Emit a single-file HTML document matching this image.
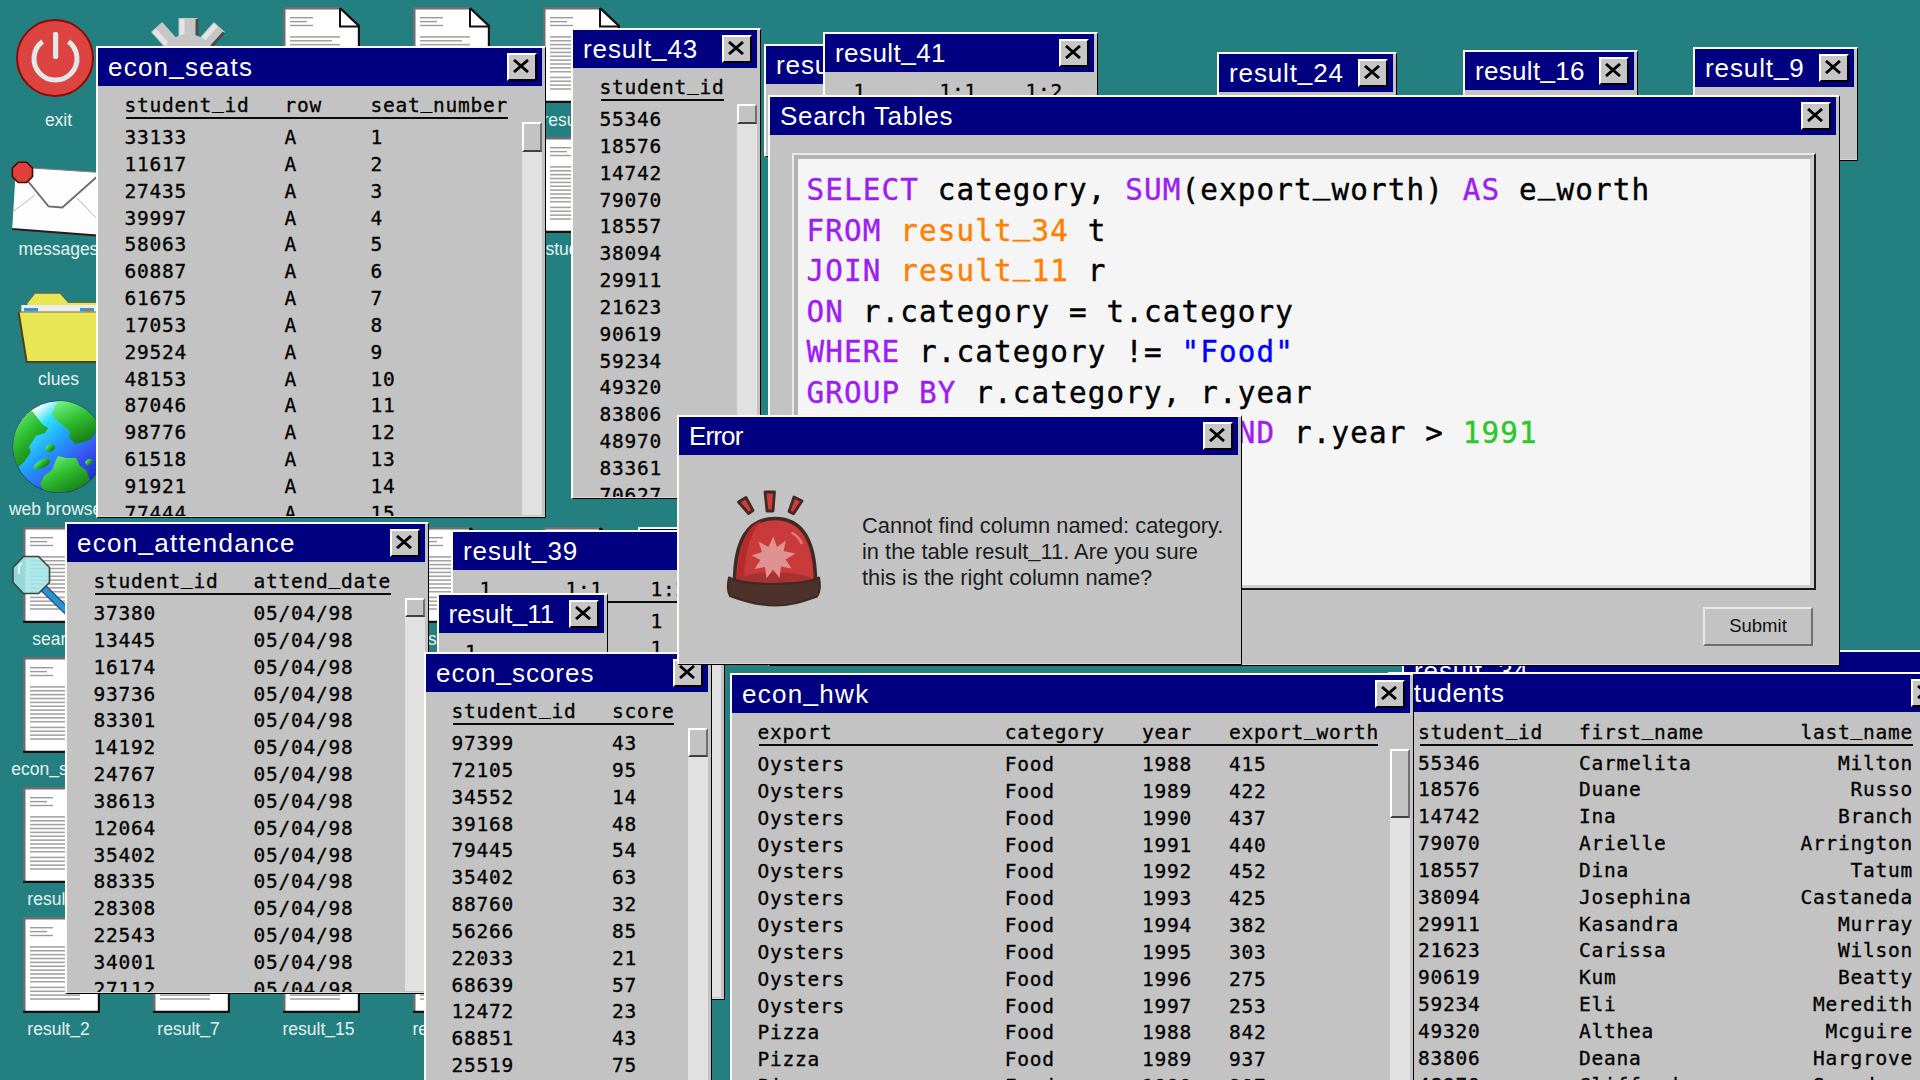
<!DOCTYPE html><html><head><meta charset="utf-8"><title>desktop</title><style>
*{box-sizing:border-box;margin:0;padding:0}
html,body{width:1920px;height:1080px;overflow:hidden;background:#248080}
body{position:relative;font-family:"Liberation Sans",sans-serif}
.win{position:absolute;background:#c3c3c3;border-top:2px solid #fcfcf4;border-left:2px solid #fcfcf4;border-right:1px solid #000;border-bottom:1px solid #000;overflow:hidden}
.win:after{content:"";position:absolute;left:0;right:0;bottom:0;height:1px;background:#dcdcdc}
.tb{position:absolute;left:0;top:0;right:3.5px;height:38px;background:#000080;color:#fff;font:26px "Liberation Sans",sans-serif;line-height:39px;padding-left:10px;white-space:nowrap;overflow:hidden}
.cb{position:absolute;top:5px;right:5px;width:30px;height:27.5px;background:#c6c6c6;border-top:2px solid #fff;border-left:2px solid #fff;border-right:2px solid #000;border-bottom:2px solid #000}
.cb svg{position:absolute;left:4.75px;top:3.85px}
.m{font-family:"DejaVu Sans Mono","Liberation Mono",monospace;font-size:19.5px;letter-spacing:0.76px;color:#000;white-space:pre;line-height:26.85px;-webkit-text-stroke:0.3px #000}
.col{position:absolute;top:0}
.ul{position:relative;top:-2px}.u{position:relative;top:-4.4px}.ut{position:relative;top:-2.5px}.us{position:relative;top:-6.6px}
.hl{position:absolute;height:2px;background:#0a0a0a}
.trk{position:absolute;width:20px;background:#e1e1e1}
.th{position:absolute;width:20px;background:#c3c3c3;border-top:2px solid #fff;border-left:2px solid #fff;border-right:2px solid #707070;border-bottom:2px solid #404040}
.ico{position:absolute}
.lbl{position:absolute;width:130px;text-align:center;font:17.5px "Liberation Sans",sans-serif;color:#e4f2f2;white-space:nowrap;line-height:20px}
.ed{position:absolute;border-top:2px solid #e8e8e8;border-left:2px solid #e8e8e8;border-right:2px solid #1c1c1c;border-bottom:2px solid #1c1c1c}
.edi{position:absolute;left:0;top:0;right:0;bottom:0;background:#f5f5f5;border-top:4px solid #b2b2b2;border-left:4px solid #b2b2b2;border-right:4px solid #cdd1cd;border-bottom:3px solid #cdd1cd}
.sql{position:absolute;left:8.5px;top:11px;-webkit-text-stroke:0.4px;font-family:"DejaVu Sans Mono","Liberation Mono",monospace;font-size:29.25px;letter-spacing:1.14px;line-height:40.5px;white-space:pre;color:#000}
.k{color:#9d1df2}.t{color:#ff8000}.s{color:#0000ff}.n{color:#2ac82a}
.btn{position:absolute;background:#c3c3c3;border-top:2px solid #e8e8e8;border-left:2px solid #e8e8e8;border-right:2px solid #6e6e6e;border-bottom:2px solid #6e6e6e;font:18.5px "Liberation Sans",sans-serif;color:#111;text-align:center}
.err{position:absolute;font:21.85px "Liberation Sans",sans-serif;line-height:26.2px;color:#1c1c1c;white-space:pre}
</style></head><body><svg class="ico" style="left:15.2px;top:17px" width="80" height="82" viewBox="0 0 80 82">
<circle cx="40" cy="41" r="38" fill="#dd4340" stroke="#8c0a08" stroke-width="2"/>
<path d="M27.5 24.5 A21.5 21.5 0 1 0 53.5 24.5" stroke="#dfe9e9" stroke-width="5" fill="none"/>
<rect x="38" y="15" width="5.2" height="27" rx="2" fill="#dfe9e9"/></svg>
<div class="lbl" style="left:-6.5px;top:109.6px">exit</div>
<svg class="ico" style="left:140px;top:14px" width="96" height="96" viewBox="-48 -48 96 96"><rect x="-9.5" y="-44" width="19" height="26" fill="#c6c6c6" transform="rotate(0)"/><rect x="-8.5" y="-43" width="5" height="17" fill="#e4e4e4" transform="rotate(0)"/><rect x="7.5" y="-43" width="3" height="17" fill="#4a4a4a" transform="rotate(0)"/><rect x="-7.5" y="-47" width="15" height="26" fill="#c6c6c6" transform="rotate(42)"/><rect x="-6.5" y="-46" width="5" height="20" fill="#e4e4e4" transform="rotate(42)"/><rect x="5.5" y="-46" width="3" height="20" fill="#4a4a4a" transform="rotate(42)"/><rect x="-9.5" y="-44" width="19" height="26" fill="#c6c6c6" transform="rotate(90)"/><rect x="-8.5" y="-43" width="5" height="17" fill="#e4e4e4" transform="rotate(90)"/><rect x="7.5" y="-43" width="3" height="17" fill="#4a4a4a" transform="rotate(90)"/><rect x="-7.5" y="-47" width="15" height="26" fill="#c6c6c6" transform="rotate(135)"/><rect x="-6.5" y="-46" width="5" height="20" fill="#e4e4e4" transform="rotate(135)"/><rect x="5.5" y="-46" width="3" height="20" fill="#4a4a4a" transform="rotate(135)"/><rect x="-9.5" y="-44" width="19" height="26" fill="#c6c6c6" transform="rotate(180)"/><rect x="-8.5" y="-43" width="5" height="17" fill="#e4e4e4" transform="rotate(180)"/><rect x="-7.5" y="-47" width="15" height="26" fill="#c6c6c6" transform="rotate(225)"/><rect x="-6.5" y="-46" width="5" height="20" fill="#e4e4e4" transform="rotate(225)"/><rect x="-9.5" y="-44" width="19" height="26" fill="#c6c6c6" transform="rotate(270)"/><rect x="-8.5" y="-43" width="5" height="17" fill="#e4e4e4" transform="rotate(270)"/><rect x="-7.5" y="-47" width="15" height="26" fill="#c6c6c6" transform="rotate(318)"/><rect x="-6.5" y="-46" width="5" height="20" fill="#e4e4e4" transform="rotate(318)"/><circle r="28" fill="#c6c6c6"/><circle r="12" fill="#248080"/></svg>
<div class="lbl" style="left:123.5px;top:109.6px">settings</div>
<svg class="ico" style="left:8px;top:158px" width="100" height="84" viewBox="8 158 100 84">
<path d="M16 167 L101 172.5 L104 236 L12.2 229 Z" fill="#fdfdfd"/>
<path d="M104 236 L12.2 229" stroke="#2a1a1a" stroke-width="2" fill="none"/>
<path d="M16 167 L101 172.5" stroke="#8a7a7a" stroke-width="1.2" fill="none"/>
<path d="M18 169 L48.5 206.4 L62.3 207.5 L100 174" stroke="#6e6a6a" stroke-width="1.8" fill="none"/>
<path d="M12.5 212 L35 195 M77 198 L103 225" stroke="#b8b4b4" stroke-width="1" fill="none"/>
<path d="M18.2 162.3 H26.6 L32.5 168.2 V176.6 L26.6 182.5 H18.2 L12.3 176.6 V168.2 Z" fill="#e0403a" stroke="#4a0a08" stroke-width="1.6"/></svg>
<div class="lbl" style="left:-6.5px;top:239.45px">messages</div>
<svg class="ico" style="left:14px;top:288px" width="96" height="80" viewBox="14 288 96 80">
<path d="M27 303.5 L35 293.3 H60 L68 302.4 H104 V320 H27 Z" fill="#e8e654" stroke="#6a5a30" stroke-width="0.8"/>
<rect x="21.3" y="305" width="82" height="7" fill="#ececec"/>
<rect x="24" y="308" width="14" height="3.4" fill="#2a9ae6"/><rect x="80" y="308" width="14" height="3.4" fill="#2a9ae6"/><rect x="87" y="308" width="3" height="3.4" fill="#e06030"/>
<path d="M18.6 312 H104 L98 362 H26.6 Z" fill="#e8e654"/>
<path d="M18.6 312 L26.6 362 H98" stroke="#50401c" stroke-width="2" fill="none"/>
<path d="M18.6 312 H104" stroke="#7a6a3a" stroke-width="1" fill="none"/></svg>
<div class="lbl" style="left:-6.5px;top:369.3px">clues</div>
<svg class="ico" style="left:10px;top:398px" width="100" height="98" viewBox="10 398 100 98">
<defs><linearGradient id="sea" x1="0.15" y1="0.1" x2="0.85" y2="0.9"><stop offset="0.05" stop-color="#ffffff"/><stop offset="0.22" stop-color="#30e0ff"/><stop offset="0.45" stop-color="#20a0ff"/><stop offset="0.75" stop-color="#3a50f0"/><stop offset="1" stop-color="#1830c0"/></linearGradient>
<linearGradient id="land" x1="0.2" y1="0" x2="0.8" y2="1"><stop offset="0" stop-color="#70f080"/><stop offset="0.4" stop-color="#30c030"/><stop offset="1" stop-color="#0f6a10"/></linearGradient>
<clipPath id="gc"><circle cx="59" cy="446.7" r="45.7"/></clipPath></defs>
<circle cx="59" cy="446.7" r="46" fill="url(#sea)" stroke="#1a3a50" stroke-width="0.8"/>
<g clip-path="url(#gc)" fill="url(#land)">
<path d="M30 408 L42 424 L48 428 L45 433 L36 436 L29 447 L31 452 L24 462 L17 468 L10 460 L10 420 Z"/>
<path d="M58 400 L52 414 L56 420 L64 426 L70 432 L69 438 L76 444 L90 440 L96 432 L110 428 L110 400 Z"/>
<path d="M40 484 L44 476 L52 470 L55 462 L58 456 L66 458 L76 458 L80 466 L86 470 L90 480 L80 492 L60 498 L46 494 Z"/>
<ellipse cx="50" cy="448" rx="5" ry="3.6" transform="rotate(-25 50 448)"/>
<ellipse cx="42" cy="464" rx="9" ry="4" transform="rotate(-28 42 464)"/>
<ellipse cx="89" cy="462" rx="4" ry="2.8" transform="rotate(-25 89 462)"/>
</g></svg>
<div class="lbl" style="left:-6.5px;top:499.15px">web browser</div>
<div class="ico" style="left:282.5px;top:7.3px"><svg width="77" height="96" viewBox="0 0 77 96"><path d="M1 1 H57 L76 19 V95 H1 Z" fill="#fff"/><path d="M1.2 95 V1.2 H57" stroke="#6e6e6e" stroke-width="2.6" fill="none"/><path d="M57 1 L76 19 V95 H0" stroke="#111" stroke-width="2.4" fill="none"/><path d="M57 1 V19.5 H76" stroke="#111" stroke-width="2" fill="none"/><rect x="7" y="10" width="23" height="1.4" fill="#9a9a9a"/><rect x="7" y="13.9" width="17" height="1.4" fill="#9a9a9a"/><rect x="7" y="17.8" width="23" height="1.4" fill="#9a9a9a"/><rect x="7" y="29.1" width="50" height="1.6" fill="#a4a4a4"/><rect x="7" y="32.97" width="42" height="1.6" fill="#a4a4a4"/><rect x="7" y="36.84" width="50" height="1.6" fill="#a4a4a4"/><rect x="7" y="40.71" width="50" height="1.6" fill="#a4a4a4"/><rect x="7" y="44.58" width="50" height="1.6" fill="#a4a4a4"/><rect x="7" y="48.45" width="50" height="1.6" fill="#a4a4a4"/><rect x="7" y="52.32" width="50" height="1.6" fill="#a4a4a4"/><rect x="7" y="56.19" width="50" height="1.6" fill="#a4a4a4"/><rect x="7" y="60.06" width="50" height="1.6" fill="#a4a4a4"/><rect x="7" y="63.93" width="50" height="1.6" fill="#a4a4a4"/><rect x="7" y="69.6" width="50" height="1.6" fill="#a4a4a4"/><rect x="7" y="73.47" width="50" height="1.6" fill="#a4a4a4"/><rect x="7" y="77.34" width="50" height="1.6" fill="#a4a4a4"/><rect x="7" y="81.21" width="50" height="1.6" fill="#a4a4a4"/></svg></div>
<div class="lbl" style="left:253.5px;top:109.6px">result<span class="ul">_</span>40</div>
<div class="ico" style="left:412.5px;top:7.3px"><svg width="77" height="96" viewBox="0 0 77 96"><path d="M1 1 H57 L76 19 V95 H1 Z" fill="#fff"/><path d="M1.2 95 V1.2 H57" stroke="#6e6e6e" stroke-width="2.6" fill="none"/><path d="M57 1 L76 19 V95 H0" stroke="#111" stroke-width="2.4" fill="none"/><path d="M57 1 V19.5 H76" stroke="#111" stroke-width="2" fill="none"/><rect x="7" y="10" width="23" height="1.4" fill="#9a9a9a"/><rect x="7" y="13.9" width="17" height="1.4" fill="#9a9a9a"/><rect x="7" y="17.8" width="23" height="1.4" fill="#9a9a9a"/><rect x="7" y="29.1" width="50" height="1.6" fill="#a4a4a4"/><rect x="7" y="32.97" width="42" height="1.6" fill="#a4a4a4"/><rect x="7" y="36.84" width="50" height="1.6" fill="#a4a4a4"/><rect x="7" y="40.71" width="50" height="1.6" fill="#a4a4a4"/><rect x="7" y="44.58" width="50" height="1.6" fill="#a4a4a4"/><rect x="7" y="48.45" width="50" height="1.6" fill="#a4a4a4"/><rect x="7" y="52.32" width="50" height="1.6" fill="#a4a4a4"/><rect x="7" y="56.19" width="50" height="1.6" fill="#a4a4a4"/><rect x="7" y="60.06" width="50" height="1.6" fill="#a4a4a4"/><rect x="7" y="63.93" width="50" height="1.6" fill="#a4a4a4"/><rect x="7" y="69.6" width="50" height="1.6" fill="#a4a4a4"/><rect x="7" y="73.47" width="50" height="1.6" fill="#a4a4a4"/><rect x="7" y="77.34" width="50" height="1.6" fill="#a4a4a4"/><rect x="7" y="81.21" width="50" height="1.6" fill="#a4a4a4"/></svg></div>
<div class="lbl" style="left:383.5px;top:109.6px">result<span class="ul">_</span>41</div>
<div class="ico" style="left:542.5px;top:7.3px"><svg width="77" height="96" viewBox="0 0 77 96"><path d="M1 1 H57 L76 19 V95 H1 Z" fill="#fff"/><path d="M1.2 95 V1.2 H57" stroke="#6e6e6e" stroke-width="2.6" fill="none"/><path d="M57 1 L76 19 V95 H0" stroke="#111" stroke-width="2.4" fill="none"/><path d="M57 1 V19.5 H76" stroke="#111" stroke-width="2" fill="none"/><rect x="7" y="10" width="23" height="1.4" fill="#9a9a9a"/><rect x="7" y="13.9" width="17" height="1.4" fill="#9a9a9a"/><rect x="7" y="17.8" width="23" height="1.4" fill="#9a9a9a"/><rect x="7" y="29.1" width="50" height="1.6" fill="#a4a4a4"/><rect x="7" y="32.97" width="42" height="1.6" fill="#a4a4a4"/><rect x="7" y="36.84" width="50" height="1.6" fill="#a4a4a4"/><rect x="7" y="40.71" width="50" height="1.6" fill="#a4a4a4"/><rect x="7" y="44.58" width="50" height="1.6" fill="#a4a4a4"/><rect x="7" y="48.45" width="50" height="1.6" fill="#a4a4a4"/><rect x="7" y="52.32" width="50" height="1.6" fill="#a4a4a4"/><rect x="7" y="56.19" width="50" height="1.6" fill="#a4a4a4"/><rect x="7" y="60.06" width="50" height="1.6" fill="#a4a4a4"/><rect x="7" y="63.93" width="50" height="1.6" fill="#a4a4a4"/><rect x="7" y="69.6" width="50" height="1.6" fill="#a4a4a4"/><rect x="7" y="73.47" width="50" height="1.6" fill="#a4a4a4"/><rect x="7" y="77.34" width="50" height="1.6" fill="#a4a4a4"/><rect x="7" y="81.21" width="50" height="1.6" fill="#a4a4a4"/></svg></div>
<div class="lbl" style="left:513.5px;top:109.6px">result<span class="ul">_</span>43</div>
<div class="ico" style="left:542.5px;top:137.3px"><svg width="77" height="96" viewBox="0 0 77 96"><path d="M1 1 H57 L76 19 V95 H1 Z" fill="#fff"/><path d="M1.2 95 V1.2 H57" stroke="#6e6e6e" stroke-width="2.6" fill="none"/><path d="M57 1 L76 19 V95 H0" stroke="#111" stroke-width="2.4" fill="none"/><path d="M57 1 V19.5 H76" stroke="#111" stroke-width="2" fill="none"/><rect x="7" y="10" width="23" height="1.4" fill="#9a9a9a"/><rect x="7" y="13.9" width="17" height="1.4" fill="#9a9a9a"/><rect x="7" y="17.8" width="23" height="1.4" fill="#9a9a9a"/><rect x="7" y="29.1" width="50" height="1.6" fill="#a4a4a4"/><rect x="7" y="32.97" width="42" height="1.6" fill="#a4a4a4"/><rect x="7" y="36.84" width="50" height="1.6" fill="#a4a4a4"/><rect x="7" y="40.71" width="50" height="1.6" fill="#a4a4a4"/><rect x="7" y="44.58" width="50" height="1.6" fill="#a4a4a4"/><rect x="7" y="48.45" width="50" height="1.6" fill="#a4a4a4"/><rect x="7" y="52.32" width="50" height="1.6" fill="#a4a4a4"/><rect x="7" y="56.19" width="50" height="1.6" fill="#a4a4a4"/><rect x="7" y="60.06" width="50" height="1.6" fill="#a4a4a4"/><rect x="7" y="63.93" width="50" height="1.6" fill="#a4a4a4"/><rect x="7" y="69.6" width="50" height="1.6" fill="#a4a4a4"/><rect x="7" y="73.47" width="50" height="1.6" fill="#a4a4a4"/><rect x="7" y="77.34" width="50" height="1.6" fill="#a4a4a4"/><rect x="7" y="81.21" width="50" height="1.6" fill="#a4a4a4"/></svg></div>
<div class="lbl" style="left:513.5px;top:239.45px">students</div>
<div class="ico" style="left:22.5px;top:527.3px"><svg width="77" height="96" viewBox="0 0 77 96"><path d="M1 1 H57 L76 19 V95 H1 Z" fill="#fff"/><path d="M1.2 95 V1.2 H57" stroke="#6e6e6e" stroke-width="2.6" fill="none"/><path d="M57 1 L76 19 V95 H0" stroke="#111" stroke-width="2.4" fill="none"/><path d="M57 1 V19.5 H76" stroke="#111" stroke-width="2" fill="none"/><rect x="7" y="10" width="23" height="1.4" fill="#9a9a9a"/><rect x="7" y="13.9" width="17" height="1.4" fill="#9a9a9a"/><rect x="7" y="17.8" width="23" height="1.4" fill="#9a9a9a"/><rect x="7" y="29.1" width="50" height="1.6" fill="#a4a4a4"/><rect x="7" y="32.97" width="42" height="1.6" fill="#a4a4a4"/><rect x="7" y="36.84" width="50" height="1.6" fill="#a4a4a4"/><rect x="7" y="40.71" width="50" height="1.6" fill="#a4a4a4"/><rect x="7" y="44.58" width="50" height="1.6" fill="#a4a4a4"/><rect x="7" y="48.45" width="50" height="1.6" fill="#a4a4a4"/><rect x="7" y="52.32" width="50" height="1.6" fill="#a4a4a4"/><rect x="7" y="56.19" width="50" height="1.6" fill="#a4a4a4"/><rect x="7" y="60.06" width="50" height="1.6" fill="#a4a4a4"/><rect x="7" y="63.93" width="50" height="1.6" fill="#a4a4a4"/><rect x="7" y="69.6" width="50" height="1.6" fill="#a4a4a4"/><rect x="7" y="73.47" width="50" height="1.6" fill="#a4a4a4"/><rect x="7" y="77.34" width="50" height="1.6" fill="#a4a4a4"/><rect x="7" y="81.21" width="50" height="1.6" fill="#a4a4a4"/></svg></div>
<div class="lbl" style="left:-6.5px;top:629px">search</div>
<svg class="ico" style="left:10px;top:552px" width="70" height="70" viewBox="10 552 70 70">
<path d="M44 588.7 L70 614" stroke="#3a4a58" stroke-width="8" fill="none"/>
<path d="M44 588.7 L70 614" stroke="#2494d8" stroke-width="5.4" fill="none"/>
<path d="M23.5 556.5 H38.5 L49.5 567.5 V582.5 L38.5 593.5 H23.5 L13 582.5 V567.5 Z" fill="#a4e6e6" fill-opacity="0.88" stroke="#3c4444" stroke-width="1.6"/>
<path d="M19 574 V566 L22 563" stroke="#f4ffff" stroke-width="1.6" fill="none"/></svg>
<div class="ico" style="left:152.5px;top:527.3px"><svg width="77" height="96" viewBox="0 0 77 96"><path d="M1 1 H57 L76 19 V95 H1 Z" fill="#fff"/><path d="M1.2 95 V1.2 H57" stroke="#6e6e6e" stroke-width="2.6" fill="none"/><path d="M57 1 L76 19 V95 H0" stroke="#111" stroke-width="2.4" fill="none"/><path d="M57 1 V19.5 H76" stroke="#111" stroke-width="2" fill="none"/><rect x="7" y="10" width="23" height="1.4" fill="#9a9a9a"/><rect x="7" y="13.9" width="17" height="1.4" fill="#9a9a9a"/><rect x="7" y="17.8" width="23" height="1.4" fill="#9a9a9a"/><rect x="7" y="29.1" width="50" height="1.6" fill="#a4a4a4"/><rect x="7" y="32.97" width="42" height="1.6" fill="#a4a4a4"/><rect x="7" y="36.84" width="50" height="1.6" fill="#a4a4a4"/><rect x="7" y="40.71" width="50" height="1.6" fill="#a4a4a4"/><rect x="7" y="44.58" width="50" height="1.6" fill="#a4a4a4"/><rect x="7" y="48.45" width="50" height="1.6" fill="#a4a4a4"/><rect x="7" y="52.32" width="50" height="1.6" fill="#a4a4a4"/><rect x="7" y="56.19" width="50" height="1.6" fill="#a4a4a4"/><rect x="7" y="60.06" width="50" height="1.6" fill="#a4a4a4"/><rect x="7" y="63.93" width="50" height="1.6" fill="#a4a4a4"/><rect x="7" y="69.6" width="50" height="1.6" fill="#a4a4a4"/><rect x="7" y="73.47" width="50" height="1.6" fill="#a4a4a4"/><rect x="7" y="77.34" width="50" height="1.6" fill="#a4a4a4"/><rect x="7" y="81.21" width="50" height="1.6" fill="#a4a4a4"/></svg></div>
<div class="lbl" style="left:123.5px;top:629px">result<span class="ul">_</span>21</div>
<div class="ico" style="left:282.5px;top:527.3px"><svg width="77" height="96" viewBox="0 0 77 96"><path d="M1 1 H57 L76 19 V95 H1 Z" fill="#fff"/><path d="M1.2 95 V1.2 H57" stroke="#6e6e6e" stroke-width="2.6" fill="none"/><path d="M57 1 L76 19 V95 H0" stroke="#111" stroke-width="2.4" fill="none"/><path d="M57 1 V19.5 H76" stroke="#111" stroke-width="2" fill="none"/><rect x="7" y="10" width="23" height="1.4" fill="#9a9a9a"/><rect x="7" y="13.9" width="17" height="1.4" fill="#9a9a9a"/><rect x="7" y="17.8" width="23" height="1.4" fill="#9a9a9a"/><rect x="7" y="29.1" width="50" height="1.6" fill="#a4a4a4"/><rect x="7" y="32.97" width="42" height="1.6" fill="#a4a4a4"/><rect x="7" y="36.84" width="50" height="1.6" fill="#a4a4a4"/><rect x="7" y="40.71" width="50" height="1.6" fill="#a4a4a4"/><rect x="7" y="44.58" width="50" height="1.6" fill="#a4a4a4"/><rect x="7" y="48.45" width="50" height="1.6" fill="#a4a4a4"/><rect x="7" y="52.32" width="50" height="1.6" fill="#a4a4a4"/><rect x="7" y="56.19" width="50" height="1.6" fill="#a4a4a4"/><rect x="7" y="60.06" width="50" height="1.6" fill="#a4a4a4"/><rect x="7" y="63.93" width="50" height="1.6" fill="#a4a4a4"/><rect x="7" y="69.6" width="50" height="1.6" fill="#a4a4a4"/><rect x="7" y="73.47" width="50" height="1.6" fill="#a4a4a4"/><rect x="7" y="77.34" width="50" height="1.6" fill="#a4a4a4"/><rect x="7" y="81.21" width="50" height="1.6" fill="#a4a4a4"/></svg></div>
<div class="lbl" style="left:253.5px;top:629px">result<span class="ul">_</span>22</div>
<div class="ico" style="left:412.5px;top:527.3px"><svg width="77" height="96" viewBox="0 0 77 96"><path d="M1 1 H57 L76 19 V95 H1 Z" fill="#fff"/><path d="M1.2 95 V1.2 H57" stroke="#6e6e6e" stroke-width="2.6" fill="none"/><path d="M57 1 L76 19 V95 H0" stroke="#111" stroke-width="2.4" fill="none"/><path d="M57 1 V19.5 H76" stroke="#111" stroke-width="2" fill="none"/><rect x="7" y="10" width="23" height="1.4" fill="#9a9a9a"/><rect x="7" y="13.9" width="17" height="1.4" fill="#9a9a9a"/><rect x="7" y="17.8" width="23" height="1.4" fill="#9a9a9a"/><rect x="7" y="29.1" width="50" height="1.6" fill="#a4a4a4"/><rect x="7" y="32.97" width="42" height="1.6" fill="#a4a4a4"/><rect x="7" y="36.84" width="50" height="1.6" fill="#a4a4a4"/><rect x="7" y="40.71" width="50" height="1.6" fill="#a4a4a4"/><rect x="7" y="44.58" width="50" height="1.6" fill="#a4a4a4"/><rect x="7" y="48.45" width="50" height="1.6" fill="#a4a4a4"/><rect x="7" y="52.32" width="50" height="1.6" fill="#a4a4a4"/><rect x="7" y="56.19" width="50" height="1.6" fill="#a4a4a4"/><rect x="7" y="60.06" width="50" height="1.6" fill="#a4a4a4"/><rect x="7" y="63.93" width="50" height="1.6" fill="#a4a4a4"/><rect x="7" y="69.6" width="50" height="1.6" fill="#a4a4a4"/><rect x="7" y="73.47" width="50" height="1.6" fill="#a4a4a4"/><rect x="7" y="77.34" width="50" height="1.6" fill="#a4a4a4"/><rect x="7" y="81.21" width="50" height="1.6" fill="#a4a4a4"/></svg></div>
<div class="lbl" style="left:383.5px;top:629px">result<span class="ul">_</span>23</div>
<div class="ico" style="left:542.5px;top:527.3px"><svg width="77" height="96" viewBox="0 0 77 96"><path d="M1 1 H57 L76 19 V95 H1 Z" fill="#fff"/><path d="M1.2 95 V1.2 H57" stroke="#6e6e6e" stroke-width="2.6" fill="none"/><path d="M57 1 L76 19 V95 H0" stroke="#111" stroke-width="2.4" fill="none"/><path d="M57 1 V19.5 H76" stroke="#111" stroke-width="2" fill="none"/><rect x="7" y="10" width="23" height="1.4" fill="#9a9a9a"/><rect x="7" y="13.9" width="17" height="1.4" fill="#9a9a9a"/><rect x="7" y="17.8" width="23" height="1.4" fill="#9a9a9a"/><rect x="7" y="29.1" width="50" height="1.6" fill="#a4a4a4"/><rect x="7" y="32.97" width="42" height="1.6" fill="#a4a4a4"/><rect x="7" y="36.84" width="50" height="1.6" fill="#a4a4a4"/><rect x="7" y="40.71" width="50" height="1.6" fill="#a4a4a4"/><rect x="7" y="44.58" width="50" height="1.6" fill="#a4a4a4"/><rect x="7" y="48.45" width="50" height="1.6" fill="#a4a4a4"/><rect x="7" y="52.32" width="50" height="1.6" fill="#a4a4a4"/><rect x="7" y="56.19" width="50" height="1.6" fill="#a4a4a4"/><rect x="7" y="60.06" width="50" height="1.6" fill="#a4a4a4"/><rect x="7" y="63.93" width="50" height="1.6" fill="#a4a4a4"/><rect x="7" y="69.6" width="50" height="1.6" fill="#a4a4a4"/><rect x="7" y="73.47" width="50" height="1.6" fill="#a4a4a4"/><rect x="7" y="77.34" width="50" height="1.6" fill="#a4a4a4"/><rect x="7" y="81.21" width="50" height="1.6" fill="#a4a4a4"/></svg></div>
<div class="lbl" style="left:513.5px;top:629px">result<span class="ul">_</span>24</div>
<div class="ico" style="left:22.5px;top:657.3px"><svg width="77" height="96" viewBox="0 0 77 96"><path d="M1 1 H57 L76 19 V95 H1 Z" fill="#fff"/><path d="M1.2 95 V1.2 H57" stroke="#6e6e6e" stroke-width="2.6" fill="none"/><path d="M57 1 L76 19 V95 H0" stroke="#111" stroke-width="2.4" fill="none"/><path d="M57 1 V19.5 H76" stroke="#111" stroke-width="2" fill="none"/><rect x="7" y="10" width="23" height="1.4" fill="#9a9a9a"/><rect x="7" y="13.9" width="17" height="1.4" fill="#9a9a9a"/><rect x="7" y="17.8" width="23" height="1.4" fill="#9a9a9a"/><rect x="7" y="29.1" width="50" height="1.6" fill="#a4a4a4"/><rect x="7" y="32.97" width="42" height="1.6" fill="#a4a4a4"/><rect x="7" y="36.84" width="50" height="1.6" fill="#a4a4a4"/><rect x="7" y="40.71" width="50" height="1.6" fill="#a4a4a4"/><rect x="7" y="44.58" width="50" height="1.6" fill="#a4a4a4"/><rect x="7" y="48.45" width="50" height="1.6" fill="#a4a4a4"/><rect x="7" y="52.32" width="50" height="1.6" fill="#a4a4a4"/><rect x="7" y="56.19" width="50" height="1.6" fill="#a4a4a4"/><rect x="7" y="60.06" width="50" height="1.6" fill="#a4a4a4"/><rect x="7" y="63.93" width="50" height="1.6" fill="#a4a4a4"/><rect x="7" y="69.6" width="50" height="1.6" fill="#a4a4a4"/><rect x="7" y="73.47" width="50" height="1.6" fill="#a4a4a4"/><rect x="7" y="77.34" width="50" height="1.6" fill="#a4a4a4"/><rect x="7" y="81.21" width="50" height="1.6" fill="#a4a4a4"/></svg></div>
<div class="lbl" style="left:-9px;top:758.85px">econ<span class="ul">_</span>seats</div>
<div class="ico" style="left:22.5px;top:787.3px"><svg width="77" height="96" viewBox="0 0 77 96"><path d="M1 1 H57 L76 19 V95 H1 Z" fill="#fff"/><path d="M1.2 95 V1.2 H57" stroke="#6e6e6e" stroke-width="2.6" fill="none"/><path d="M57 1 L76 19 V95 H0" stroke="#111" stroke-width="2.4" fill="none"/><path d="M57 1 V19.5 H76" stroke="#111" stroke-width="2" fill="none"/><rect x="7" y="10" width="23" height="1.4" fill="#9a9a9a"/><rect x="7" y="13.9" width="17" height="1.4" fill="#9a9a9a"/><rect x="7" y="17.8" width="23" height="1.4" fill="#9a9a9a"/><rect x="7" y="29.1" width="50" height="1.6" fill="#a4a4a4"/><rect x="7" y="32.97" width="42" height="1.6" fill="#a4a4a4"/><rect x="7" y="36.84" width="50" height="1.6" fill="#a4a4a4"/><rect x="7" y="40.71" width="50" height="1.6" fill="#a4a4a4"/><rect x="7" y="44.58" width="50" height="1.6" fill="#a4a4a4"/><rect x="7" y="48.45" width="50" height="1.6" fill="#a4a4a4"/><rect x="7" y="52.32" width="50" height="1.6" fill="#a4a4a4"/><rect x="7" y="56.19" width="50" height="1.6" fill="#a4a4a4"/><rect x="7" y="60.06" width="50" height="1.6" fill="#a4a4a4"/><rect x="7" y="63.93" width="50" height="1.6" fill="#a4a4a4"/><rect x="7" y="69.6" width="50" height="1.6" fill="#a4a4a4"/><rect x="7" y="73.47" width="50" height="1.6" fill="#a4a4a4"/><rect x="7" y="77.34" width="50" height="1.6" fill="#a4a4a4"/><rect x="7" y="81.21" width="50" height="1.6" fill="#a4a4a4"/></svg></div>
<div class="lbl" style="left:-6.5px;top:888.7px">result<span class="ul">_</span>1</div>
<div class="ico" style="left:22.5px;top:917.3px"><svg width="77" height="96" viewBox="0 0 77 96"><path d="M1 1 H57 L76 19 V95 H1 Z" fill="#fff"/><path d="M1.2 95 V1.2 H57" stroke="#6e6e6e" stroke-width="2.6" fill="none"/><path d="M57 1 L76 19 V95 H0" stroke="#111" stroke-width="2.4" fill="none"/><path d="M57 1 V19.5 H76" stroke="#111" stroke-width="2" fill="none"/><rect x="7" y="10" width="23" height="1.4" fill="#9a9a9a"/><rect x="7" y="13.9" width="17" height="1.4" fill="#9a9a9a"/><rect x="7" y="17.8" width="23" height="1.4" fill="#9a9a9a"/><rect x="7" y="29.1" width="50" height="1.6" fill="#a4a4a4"/><rect x="7" y="32.97" width="42" height="1.6" fill="#a4a4a4"/><rect x="7" y="36.84" width="50" height="1.6" fill="#a4a4a4"/><rect x="7" y="40.71" width="50" height="1.6" fill="#a4a4a4"/><rect x="7" y="44.58" width="50" height="1.6" fill="#a4a4a4"/><rect x="7" y="48.45" width="50" height="1.6" fill="#a4a4a4"/><rect x="7" y="52.32" width="50" height="1.6" fill="#a4a4a4"/><rect x="7" y="56.19" width="50" height="1.6" fill="#a4a4a4"/><rect x="7" y="60.06" width="50" height="1.6" fill="#a4a4a4"/><rect x="7" y="63.93" width="50" height="1.6" fill="#a4a4a4"/><rect x="7" y="69.6" width="50" height="1.6" fill="#a4a4a4"/><rect x="7" y="73.47" width="50" height="1.6" fill="#a4a4a4"/><rect x="7" y="77.34" width="50" height="1.6" fill="#a4a4a4"/><rect x="7" y="81.21" width="50" height="1.6" fill="#a4a4a4"/></svg></div>
<div class="lbl" style="left:-6.5px;top:1018.55px">result<span class="ul">_</span>2</div>
<div class="ico" style="left:152.5px;top:917.3px"><svg width="77" height="96" viewBox="0 0 77 96"><path d="M1 1 H57 L76 19 V95 H1 Z" fill="#fff"/><path d="M1.2 95 V1.2 H57" stroke="#6e6e6e" stroke-width="2.6" fill="none"/><path d="M57 1 L76 19 V95 H0" stroke="#111" stroke-width="2.4" fill="none"/><path d="M57 1 V19.5 H76" stroke="#111" stroke-width="2" fill="none"/><rect x="7" y="10" width="23" height="1.4" fill="#9a9a9a"/><rect x="7" y="13.9" width="17" height="1.4" fill="#9a9a9a"/><rect x="7" y="17.8" width="23" height="1.4" fill="#9a9a9a"/><rect x="7" y="29.1" width="50" height="1.6" fill="#a4a4a4"/><rect x="7" y="32.97" width="42" height="1.6" fill="#a4a4a4"/><rect x="7" y="36.84" width="50" height="1.6" fill="#a4a4a4"/><rect x="7" y="40.71" width="50" height="1.6" fill="#a4a4a4"/><rect x="7" y="44.58" width="50" height="1.6" fill="#a4a4a4"/><rect x="7" y="48.45" width="50" height="1.6" fill="#a4a4a4"/><rect x="7" y="52.32" width="50" height="1.6" fill="#a4a4a4"/><rect x="7" y="56.19" width="50" height="1.6" fill="#a4a4a4"/><rect x="7" y="60.06" width="50" height="1.6" fill="#a4a4a4"/><rect x="7" y="63.93" width="50" height="1.6" fill="#a4a4a4"/><rect x="7" y="69.6" width="50" height="1.6" fill="#a4a4a4"/><rect x="7" y="73.47" width="50" height="1.6" fill="#a4a4a4"/><rect x="7" y="77.34" width="50" height="1.6" fill="#a4a4a4"/><rect x="7" y="81.21" width="50" height="1.6" fill="#a4a4a4"/></svg></div>
<div class="lbl" style="left:123.5px;top:1018.55px">result<span class="ul">_</span>7</div>
<div class="ico" style="left:282.5px;top:917.3px"><svg width="77" height="96" viewBox="0 0 77 96"><path d="M1 1 H57 L76 19 V95 H1 Z" fill="#fff"/><path d="M1.2 95 V1.2 H57" stroke="#6e6e6e" stroke-width="2.6" fill="none"/><path d="M57 1 L76 19 V95 H0" stroke="#111" stroke-width="2.4" fill="none"/><path d="M57 1 V19.5 H76" stroke="#111" stroke-width="2" fill="none"/><rect x="7" y="10" width="23" height="1.4" fill="#9a9a9a"/><rect x="7" y="13.9" width="17" height="1.4" fill="#9a9a9a"/><rect x="7" y="17.8" width="23" height="1.4" fill="#9a9a9a"/><rect x="7" y="29.1" width="50" height="1.6" fill="#a4a4a4"/><rect x="7" y="32.97" width="42" height="1.6" fill="#a4a4a4"/><rect x="7" y="36.84" width="50" height="1.6" fill="#a4a4a4"/><rect x="7" y="40.71" width="50" height="1.6" fill="#a4a4a4"/><rect x="7" y="44.58" width="50" height="1.6" fill="#a4a4a4"/><rect x="7" y="48.45" width="50" height="1.6" fill="#a4a4a4"/><rect x="7" y="52.32" width="50" height="1.6" fill="#a4a4a4"/><rect x="7" y="56.19" width="50" height="1.6" fill="#a4a4a4"/><rect x="7" y="60.06" width="50" height="1.6" fill="#a4a4a4"/><rect x="7" y="63.93" width="50" height="1.6" fill="#a4a4a4"/><rect x="7" y="69.6" width="50" height="1.6" fill="#a4a4a4"/><rect x="7" y="73.47" width="50" height="1.6" fill="#a4a4a4"/><rect x="7" y="77.34" width="50" height="1.6" fill="#a4a4a4"/><rect x="7" y="81.21" width="50" height="1.6" fill="#a4a4a4"/></svg></div>
<div class="lbl" style="left:253.5px;top:1018.55px">result<span class="ul">_</span>15</div>
<div class="ico" style="left:412.5px;top:917.3px"><svg width="77" height="96" viewBox="0 0 77 96"><path d="M1 1 H57 L76 19 V95 H1 Z" fill="#fff"/><path d="M1.2 95 V1.2 H57" stroke="#6e6e6e" stroke-width="2.6" fill="none"/><path d="M57 1 L76 19 V95 H0" stroke="#111" stroke-width="2.4" fill="none"/><path d="M57 1 V19.5 H76" stroke="#111" stroke-width="2" fill="none"/><rect x="7" y="10" width="23" height="1.4" fill="#9a9a9a"/><rect x="7" y="13.9" width="17" height="1.4" fill="#9a9a9a"/><rect x="7" y="17.8" width="23" height="1.4" fill="#9a9a9a"/><rect x="7" y="29.1" width="50" height="1.6" fill="#a4a4a4"/><rect x="7" y="32.97" width="42" height="1.6" fill="#a4a4a4"/><rect x="7" y="36.84" width="50" height="1.6" fill="#a4a4a4"/><rect x="7" y="40.71" width="50" height="1.6" fill="#a4a4a4"/><rect x="7" y="44.58" width="50" height="1.6" fill="#a4a4a4"/><rect x="7" y="48.45" width="50" height="1.6" fill="#a4a4a4"/><rect x="7" y="52.32" width="50" height="1.6" fill="#a4a4a4"/><rect x="7" y="56.19" width="50" height="1.6" fill="#a4a4a4"/><rect x="7" y="60.06" width="50" height="1.6" fill="#a4a4a4"/><rect x="7" y="63.93" width="50" height="1.6" fill="#a4a4a4"/><rect x="7" y="69.6" width="50" height="1.6" fill="#a4a4a4"/><rect x="7" y="73.47" width="50" height="1.6" fill="#a4a4a4"/><rect x="7" y="77.34" width="50" height="1.6" fill="#a4a4a4"/><rect x="7" y="81.21" width="50" height="1.6" fill="#a4a4a4"/></svg></div>
<div class="lbl" style="left:383.5px;top:1018.55px">result<span class="ul">_</span>16</div>
<div class="win" style="left:96px;top:46px;width:450px;height:472px;z-index:5;"><div class="tb"><span class="tt" style="letter-spacing:1.220px">econ<span class="ut">_</span>seats</span><div class="cb"><svg width="16" height="14" viewBox="0 0 16 14"><path d="M1 1 L15 13 M15 1 L1 13" stroke="#000" stroke-width="2.9" fill="none"/></svg></div></div><div class="m col" style="left:26.5px;top:44.95px">student<span class="u">_</span>id</div><div class="m col" style="left:186.5px;top:44.95px">row</div><div class="m col" style="left:272.5px;top:44.95px">seat<span class="u">_</span>number</div><div class="hl" style="left:28px;top:69px;width:382px"></div><div class="m col" style="left:26.5px;top:77.05px">33133
11617
27435
39997
58063
60887
61675
17053
29524
48153
87046
98776
61518
91921
77444
10001</div><div class="m col" style="left:186.5px;top:77.05px">A
A
A
A
A
A
A
A
A
A
A
A
A
A
A
A</div><div class="m col" style="left:272.5px;top:77.05px">1
2
3
4
5
6
7
8
9
10
11
12
13
14
15
16</div><div class="trk" style="left:423.5px;top:74px;height:393px"></div><div class="th" style="left:423.5px;top:74px;height:30px"></div></div>
<div class="win" style="left:571px;top:28px;width:190px;height:471px;z-index:5;"><div class="tb"><span class="tt" style="letter-spacing:0.910px">result<span class="ut">_</span>43</span><div class="cb"><svg width="16" height="14" viewBox="0 0 16 14"><path d="M1 1 L15 13 M15 1 L1 13" stroke="#000" stroke-width="2.9" fill="none"/></svg></div></div><div class="m col" style="left:26.5px;top:44.95px">student<span class="u">_</span>id</div><div class="hl" style="left:28px;top:69px;width:123px"></div><div class="m col" style="left:26.5px;top:77.05px">55346
18576
14742
79070
18557
38094
29911
21623
90619
59234
49320
83806
48970
83361
70627
11111</div><div class="trk" style="left:163.5px;top:74px;height:392px"></div><div class="th" style="left:163.5px;top:74px;height:20px"></div></div>
<div class="win" style="left:764px;top:44px;width:176px;height:113px;z-index:3;"><div class="tb"><span class="tt" style="letter-spacing:0.879px">result<span class="ut">_</span>42</span><div class="cb"><svg width="16" height="14" viewBox="0 0 16 14"><path d="M1 1 L15 13 M15 1 L1 13" stroke="#000" stroke-width="2.9" fill="none"/></svg></div></div></div>
<div class="win" style="left:823px;top:32px;width:275px;height:470px;z-index:4;"><div class="tb"><span class="tt" style="letter-spacing:0.441px">result<span class="ut">_</span>41</span><div class="cb"><svg width="16" height="14" viewBox="0 0 16 14"><path d="M1 1 L15 13 M15 1 L1 13" stroke="#000" stroke-width="2.9" fill="none"/></svg></div></div><div class="m col" style="left:28.5px;top:44.95px">1</div><div class="m col" style="left:114.5px;top:44.95px">1:1</div><div class="m col" style="left:200.5px;top:44.95px">1:2</div><div class="hl" style="left:30px;top:69px;width:209px"></div><div class="m col" style="left:28.5px;top:77.05px">1
1
1
1
1
1
1
1
1
1
1
1
1
1
1
1</div><div class="m col" style="left:114.5px;top:77.05px">1
1
1
1
1
1
1
1
1
1
1
1
1
1
1
1</div><div class="m col" style="left:200.5px;top:77.05px">1
1
1
1
1
1
1
1
1
1
1
1
1
1
1
1</div><div class="trk" style="left:248.5px;top:74px;height:391px"></div><div class="th" style="left:248.5px;top:74px;height:20px"></div></div>
<div class="win" style="left:1217px;top:52px;width:180px;height:114px;z-index:3;"><div class="tb"><span class="tt" style="letter-spacing:0.879px">result<span class="ut">_</span>24</span><div class="cb"><svg width="16" height="14" viewBox="0 0 16 14"><path d="M1 1 L15 13 M15 1 L1 13" stroke="#000" stroke-width="2.9" fill="none"/></svg></div></div></div>
<div class="win" style="left:1463px;top:50px;width:175px;height:114px;z-index:3;"><div class="tb"><span class="tt" style="letter-spacing:0.316px">result<span class="ut">_</span>16</span><div class="cb"><svg width="16" height="14" viewBox="0 0 16 14"><path d="M1 1 L15 13 M15 1 L1 13" stroke="#000" stroke-width="2.9" fill="none"/></svg></div></div></div>
<div class="win" style="left:1693px;top:47px;width:165px;height:114px;z-index:3;"><div class="tb"><span class="tt" style="letter-spacing:0.891px">result<span class="ut">_</span>9</span><div class="cb"><svg width="16" height="14" viewBox="0 0 16 14"><path d="M1 1 L15 13 M15 1 L1 13" stroke="#000" stroke-width="2.9" fill="none"/></svg></div></div></div>
<div class="win" style="left:1402px;top:650px;width:598px;height:250px;z-index:3;"><div class="tb"><span class="tt" style="letter-spacing:0.879px">result<span class="ut">_</span>34</span></div></div>
<div class="win" style="left:638px;top:527px;width:182px;height:113px;z-index:3;"><div class="tb"><span class="tt" style="letter-spacing:0.879px">result<span class="ut">_</span>38</span></div></div>
<div class="win" style="left:768px;top:95px;width:1072px;height:571px;z-index:6;"><div class="tb"><span class="tt" style="letter-spacing:0.684px">Search Tables</span><div class="cb"><svg width="16" height="14" viewBox="0 0 16 14"><path d="M1 1 L15 13 M15 1 L1 13" stroke="#000" stroke-width="2.9" fill="none"/></svg></div></div><div class="ed" style="left:22px;top:56px;width:1024px;height:437px"><div class="edi"><div class="sql"><span class="k">SELECT</span> category, <span class="k">SUM</span>(export<span class="us">_</span>worth) <span class="k">AS</span> e<span class="us">_</span>worth
<span class="k">FROM</span> <span class="t">result<span class="us">_</span>34</span> t
<span class="k">JOIN</span> <span class="t">result<span class="us">_</span>11</span> r
<span class="k">ON</span> r.category = t.category
<span class="k">WHERE</span> r.category != <span class="s">"Food"</span>
<span class="k">GROUP BY</span> r.category, r.year
<span class="k">HAVING</span> e<span class="us">_</span>worth &gt; 1000 <span class="k">AND</span> r.year &gt; <span class="n">1991</span></div></div></div><div class="btn" style="left:933px;top:510px;width:110px;height:39px;line-height:34px">Submit</div></div>
<div class="win" style="left:677px;top:415px;width:565px;height:250px;z-index:9;"><div class="tb"><span class="tt" style="letter-spacing:-0.845px">Error</span><div class="cb"><svg width="16" height="14" viewBox="0 0 16 14"><path d="M1 1 L15 13 M15 1 L1 13" stroke="#000" stroke-width="2.9" fill="none"/></svg></div></div><svg style="position:absolute;left:45px;top:71px" width="100" height="120" viewBox="724 488 100 120">
<path d="M765 492 H774.5 L773 511 H767 Z" fill="#d03a38" stroke="#3e2b25" stroke-width="2.8" stroke-linejoin="round"/>
<path d="M738.5 502 L746 497.5 L753 510.5 L748.5 513.5 Z" fill="#d03a38" stroke="#3e2b25" stroke-width="2.8" stroke-linejoin="round"/>
<path d="M794 497 L802 501 L793.5 513.8 L789 511.5 Z" fill="#d03a38" stroke="#3e2b25" stroke-width="2.8" stroke-linejoin="round"/>
<path d="M734.5 586 C 734 540 748 518.5 775 518.5 C 802 518.5 816 540 815.5 586 Z" fill="#c93a3a" stroke="#3e2b25" stroke-width="3.6"/>
<path d="M737.5 584 C 737 545 748 524 762 521 C 752 530 744 550 744 584 Z" fill="#b52a2c"/>
<ellipse cx="775" cy="580" rx="37" ry="7.5" fill="#a83232"/>
<path d="M792.5 533 Q 799 537 801.5 543" stroke="#e87878" stroke-width="2.6" fill="none" stroke-linecap="round"/>
<path d="M773.3 536.5 L777 547 L786 540.5 L783.5 551 L795.5 553.5 L785.5 559.5 L791.5 568.5 L781 566.5 L779.5 578 L773 569.5 L766.5 578.5 L765 567 L754.5 569 L760.5 560 L751.5 555.5 L762 552 L758.5 541.5 L768.5 547 Z" fill="#e09292"/>
<path d="M729 577.5 C 745 586 803 586 819 577.5 C 820.5 585 820 592 817 596.5 C 800 602.5 790 605.5 775 605.5 C 760 605.5 746 602 730 596 C 727 591 727.5 584 729 577.5 Z" fill="#4c322a" stroke="#3e2b25" stroke-width="2" stroke-linejoin="round"/>
</svg><div class="err" style="left:183px;top:96px">Cannot find column named: category.
in the table result<span class="ut">_</span>11. Are you sure
this is the right column name?</div></div>
<div class="win" style="left:65px;top:522px;width:364px;height:472px;z-index:5;"><div class="tb"><span class="tt" style="letter-spacing:1.283px">econ<span class="ut">_</span>attendance</span><div class="cb"><svg width="16" height="14" viewBox="0 0 16 14"><path d="M1 1 L15 13 M15 1 L1 13" stroke="#000" stroke-width="2.9" fill="none"/></svg></div></div><div class="m col" style="left:26.5px;top:44.95px">student<span class="u">_</span>id</div><div class="m col" style="left:186.5px;top:44.95px">attend<span class="u">_</span>date</div><div class="hl" style="left:28px;top:69px;width:296px"></div><div class="m col" style="left:26.5px;top:77.05px">37380
13445
16174
93736
83301
14192
24767
38613
12064
35402
88335
28308
22543
34001
27112
55555</div><div class="m col" style="left:186.5px;top:77.05px">05/04/98
05/04/98
05/04/98
05/04/98
05/04/98
05/04/98
05/04/98
05/04/98
05/04/98
05/04/98
05/04/98
05/04/98
05/04/98
05/04/98
05/04/98
05/04/98</div><div class="trk" style="left:337.5px;top:74px;height:393px"></div><div class="th" style="left:337.5px;top:74px;height:19px"></div></div>
<div class="win" style="left:451px;top:530px;width:274px;height:470px;z-index:4;"><div class="tb"><span class="tt" style="letter-spacing:0.904px">result<span class="ut">_</span>39</span><div class="cb"><svg width="16" height="14" viewBox="0 0 16 14"><path d="M1 1 L15 13 M15 1 L1 13" stroke="#000" stroke-width="2.9" fill="none"/></svg></div></div><div class="m col" style="left:26.5px;top:44.95px">1</div><div class="m col" style="left:112.5px;top:44.95px">1:1</div><div class="m col" style="left:197.5px;top:44.95px">1:2</div><div class="hl" style="left:28px;top:69px;width:208px"></div><div class="m col" style="left:26.5px;top:77.05px">1
1
1
1
1
1
1
1
1
1
1
1
1
1
1
1</div><div class="m col" style="left:112.5px;top:77.05px">1
1
1
1
1
1
1
1
1
1
1
1
1
1
1
1</div><div class="m col" style="left:197.5px;top:77.05px">1
1
1
1
1
1
1
1
1
1
1
1
1
1
1
1</div><div class="trk" style="left:247.5px;top:74px;height:391px"></div><div class="th" style="left:247.5px;top:74px;height:20px"></div></div>
<div class="win" style="left:436.5px;top:593px;width:171.5px;height:114px;z-index:5;"><div class="tb"><span class="tt" style="letter-spacing:0.094px">result<span class="ut">_</span>11</span><div class="cb"><svg width="16" height="14" viewBox="0 0 16 14"><path d="M1 1 L15 13 M15 1 L1 13" stroke="#000" stroke-width="2.9" fill="none"/></svg></div></div><div class="m col" style="left:26.5px;top:44.95px">1</div><div class="hl" style="left:28px;top:69px;width:52px"></div><div class="m col" style="left:26.5px;top:77.05px">1
1
1</div></div>
<div class="win" style="left:424px;top:652px;width:288px;height:472px;z-index:7;"><div class="tb"><span class="tt" style="letter-spacing:1.006px">econ<span class="ut">_</span>scores</span><div class="cb"><svg width="16" height="14" viewBox="0 0 16 14"><path d="M1 1 L15 13 M15 1 L1 13" stroke="#000" stroke-width="2.9" fill="none"/></svg></div></div><div class="m col" style="left:25.5px;top:44.95px">student<span class="u">_</span>id</div><div class="m col" style="left:186px;top:44.95px">score</div><div class="hl" style="left:27px;top:69px;width:221px"></div><div class="m col" style="left:25.5px;top:77.05px">97399
72105
34552
39168
79445
35402
88760
56266
22033
68639
12472
68851
25519
31415
27182
16180</div><div class="m col" style="left:186px;top:77.05px">43
95
14
48
54
63
32
85
21
57
23
43
75
60
81
33</div><div class="trk" style="left:261.5px;top:74px;height:393px"></div><div class="th" style="left:261.5px;top:74px;height:29px"></div></div>
<div class="win" style="left:1388px;top:672px;width:562px;height:470px;z-index:5;"><div class="tb"><span class="tt" style="letter-spacing:0.815px">students</span><div class="cb"><svg width="16" height="14" viewBox="0 0 16 14"><path d="M1 1 L15 13 M15 1 L1 13" stroke="#000" stroke-width="2.9" fill="none"/></svg></div></div><div class="m col" style="left:28px;top:45.95px">student<span class="u">_</span>id</div><div class="m col" style="left:189px;top:45.95px">first<span class="u">_</span>name</div><div class="m col" style="right:36px;top:45.95px;text-align:right">last<span class="u">_</span>name</div><div class="hl" style="left:29.5px;top:70px;width:493.5px"></div><div class="m col" style="left:28px;top:76.55px">55346
18576
14742
79070
18557
38094
29911
21623
90619
59234
49320
83806
48970
83361</div><div class="m col" style="left:189px;top:76.55px">Carmelita
Duane
Ina
Arielle
Dina
Josephina
Kasandra
Carissa
Kum
Eli
Althea
Deana
Clifford
Maria</div><div class="m col" style="right:36px;top:76.55px;text-align:right">Milton
Russo
Branch
Arrington
Tatum
Castaneda
Murray
Wilson
Beatty
Meredith
Mcguire
Hargrove
Saunders
Lopez</div></div>
<div class="win" style="left:730px;top:673px;width:684px;height:470px;z-index:6;"><div class="tb"><span class="tt" style="letter-spacing:1.299px">econ<span class="ut">_</span>hwk</span><div class="cb"><svg width="16" height="14" viewBox="0 0 16 14"><path d="M1 1 L15 13 M15 1 L1 13" stroke="#000" stroke-width="2.9" fill="none"/></svg></div></div><div class="m col" style="left:25.5px;top:44.95px">export</div><div class="m col" style="left:272.8px;top:44.95px">category</div><div class="m col" style="left:410px;top:44.95px">year</div><div class="m col" style="left:497px;top:44.95px">export<span class="u">_</span>worth</div><div class="hl" style="left:27px;top:69px;width:619px"></div><div class="m col" style="left:25.5px;top:77.05px">Oysters
Oysters
Oysters
Oysters
Oysters
Oysters
Oysters
Oysters
Oysters
Oysters
Pizza
Pizza
Pizza
Pizza</div><div class="m col" style="left:272.8px;top:77.05px">Food
Food
Food
Food
Food
Food
Food
Food
Food
Food
Food
Food
Food
Food</div><div class="m col" style="left:410px;top:77.05px">1988
1989
1990
1991
1992
1993
1994
1995
1996
1997
1988
1989
1990
1991</div><div class="m col" style="left:497px;top:77.05px">415
422
437
440
452
425
382
303
275
253
842
937
907
911</div><div class="trk" style="left:657.5px;top:74px;height:391px"></div><div class="th" style="left:657.5px;top:74px;height:69px"></div></div></body></html>
